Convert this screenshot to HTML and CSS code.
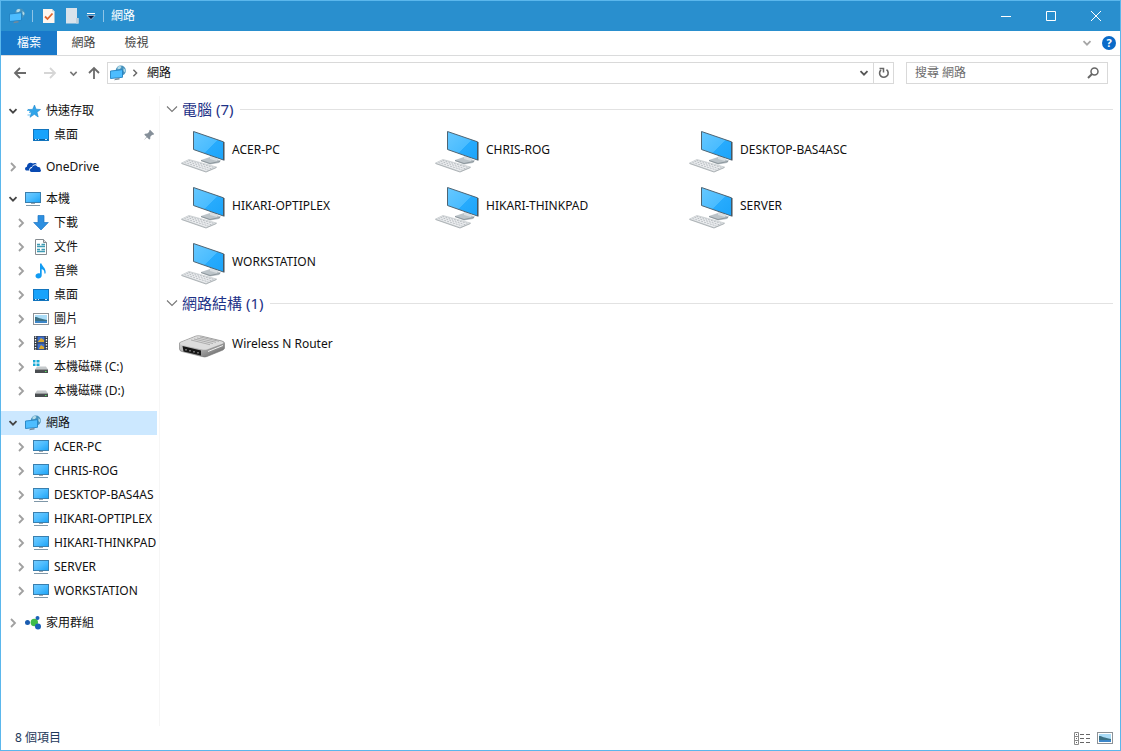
FILE: index.html
```html
<!DOCTYPE html>
<html lang="zh-Hant">
<head>
<meta charset="utf-8">
<title>網路</title>
<link rel="stylesheet" href="styles.css">
</head>
<body>
<svg class="defs" aria-hidden="true">
  <defs>
    <linearGradient id="screen" x1="0" y1="0" x2="1" y2="1"><stop offset="0" stop-color="#74ccff"/><stop offset=".5" stop-color="#4cbcff"/><stop offset="1" stop-color="#1ba2f5"/></linearGradient>
    <linearGradient id="big" x1="0" y1="0" x2="1" y2="1"><stop offset="0" stop-color="#66c8ff"/><stop offset=".55" stop-color="#4abcff"/><stop offset=".56" stop-color="#27abfd"/><stop offset="1" stop-color="#1ca4fa"/></linearGradient>
    <linearGradient id="metal" x1="0" y1="0" x2="1" y2="1"><stop offset="0" stop-color="#dedede"/><stop offset=".6" stop-color="#a5a5a5"/><stop offset="1" stop-color="#555"/></linearGradient>
    <symbol id="i-down" viewBox="0 0 10 10"><path d="M1.5 3.2 5 6.7 8.500 3.2" fill="none" stroke="currentColor" stroke-width="1.8"/></symbol>
    <symbol id="i-thin" viewBox="0 0 12 12"><path d="M1 3.500 6 8.500 11 3.500" fill="none" stroke="currentColor" stroke-width="1.1"/></symbol>
    <symbol id="i-right" viewBox="0 0 10 10"><path d="M3 1 7 5 3 9" fill="none" stroke="currentColor" stroke-width="1.8"/></symbol>
    <symbol id="i-star" viewBox="0 0 16 16"><path d="M9.500 2 11 6.200 15.500 6.500 12 9.200 13.200 14 9.300 11.300 5 14.300 6.400 9.500 2.800 6.500 7.600 6.400Z" fill="#2fa4ea" stroke="#1c86cc" stroke-width=".6"/><path d="M4 9.500H6M2.500 12H5M2 7.500H4" stroke="#65bdf0"/></symbol>
    <symbol id="i-desk" viewBox="0 0 16 16"><rect x=".5" y="2.500" width="15" height="11" fill="#18a3fc" stroke="#1274bd"/><path d="M1 12.500H15" stroke="#0b5f9f"/><path d="M2 12.500H3.500M5 12.500H6M12 12.500H14" stroke="#c4e8ff"/></symbol>
    <symbol id="i-cloud" viewBox="0 0 16 16"><path d="M1.800 11.500C-.6 11.300-.5 7.900 1.900 7.700 2 4.500 5.300 2.600 8 4.600 9 3.600 11 3.800 12 5.400 9.500 4.700 7.400 5.900 6.800 8 4.700 8.200 3.800 10 4.400 11.500Z" fill="#094ab2"/><path d="M6.500 13C4.200 12.800 4.400 9.300 7 9 7.200 6.100 11.200 5.100 12.700 8 15 7.600 15.600 9.400 15.200 10 16.600 11 16 13 14.500 13Z" fill="#094ab2"/></symbol>
    <symbol id="i-pc" viewBox="0 0 16 16"><rect x=".5" y="1.500" width="15" height="10" fill="url(#screen)" stroke="#3a7fae"/><path d="M6 12H10V13H6Z" fill="#9aa7b0"/><path d="M1 14.500H15" stroke="#7f97a8"/></symbol>
    <symbol id="i-dl" viewBox="0 0 16 16"><path d="M5 .5H11V7.500H15.300L8 15 .7 7.500H5Z" fill="#2d8fe0" stroke="#1c76c4" stroke-width=".7"/></symbol>
    <symbol id="i-doc" viewBox="0 0 16 16"><path d="M2.500 .5H10.500L13.500 3.500V15.500H2.500Z" fill="#fff" stroke="#858b90"/><path d="M10.500 .5V3.500H13.500" fill="#ddd" stroke="#858b90"/><path d="M4 5.500H7M8.500 5.500H12M4 7.500H12M4 10.500H7M8.500 10.500H12M4 12.500H12" stroke="#3e9bb4" stroke-width="1.300"/></symbol>
    <symbol id="i-music" viewBox="0 0 16 16"><path d="M7 .5H8.500C9 3.500 13.500 5 12.500 10.500H11.300C11.800 7.500 10 6.500 8.700 6V12.500C8.700 16 2.500 16.500 2.500 13 2.500 10.500 5.500 9.900 7 10.600Z" fill="#119bf2"/></symbol>
    <symbol id="i-pic" viewBox="0 0 16 16"><rect x=".5" y="2.500" width="15" height="11" fill="#fff" stroke="#8d9297"/><path d="M2 4H14V12H2Z" fill="#aadcf7"/><path d="M2 6C5 6 7 8 14 9V12H2Z" fill="#3b7084"/><path d="M2 10H14V12H2Z" fill="#3d86c8"/></symbol>
    <symbol id="i-film" viewBox="0 0 16 16"><path d="M1 1H15V15H1Z" fill="#333b45"/><path d="M4.500 1.500H11.500V7.500H4.500ZM4.500 8.500H11.500V14.500H4.500Z" fill="#3c6fd0"/><path d="M5 6.500 8 3 11 5V7H5ZM6 13.500 8 10 11 12V14H6Z" fill="#d9a92e"/><path d="M2.500 1.500V15M13.500 1.500V15" stroke="#fff" stroke-width="1.400" stroke-dasharray="1.300 1.300"/></symbol>
    <symbol id="i-disk" viewBox="0 0 16 16"><path d="M4 7.500H13L15 10.500H2Z" fill="#c5c9cb"/><path d="M2 10.500H15V14H2Z" fill="#4a4e51"/><path d="M12 12.500H13.500" stroke="#54e35e"/></symbol>
    <symbol id="i-sys" viewBox="0 0 16 16"><path d="M0 1H2.500V3.500H0ZM3.500 1H6.500V3.500H3.500ZM0 4.500H2.500V7H0ZM3.500 4.500H6.500V7H3.500Z" fill="#19a9d5"/><use href="#i-disk"/></symbol>
    <symbol id="i-net" viewBox="0 0 16 16"><circle cx="10.800" cy="5.600" r="5.100" fill="#4692bd"/><path d="M7.500 2C9 .6 11 .8 11.500 2L10 4 7.500 4.500ZM13.500 3 15.500 5 15 7.500 13.500 6Z" fill="#b4dbe8"/><path d="M.5 6 12.500 4.700V12.300L.5 13.500Z" fill="#4dbdff" stroke="#2482c2" stroke-width=".9"/><path d="M4 15.200 9.500 14.400V13L5.500 13.500Z" fill="#74899a"/></symbol>
    <symbol id="i-home" viewBox="0 0 16 16"><path d="M10 8 13 2.500M10 8 13 12" stroke="#7db98a"/><circle cx="2.500" cy="7.500" r="2.500" fill="#1a5cb0"/><circle cx="9.300" cy="7.500" r="3.700" fill="#3fbd49"/><circle cx="12.500" cy="3" r="2" fill="#1a62b8"/><circle cx="13" cy="11.500" r="3" fill="#1a62b8"/></symbol>
    <symbol id="i-pin" viewBox="0 0 12 12"><path d="M7 .8 11.200 5 10 6 9.200 5.700 7.300 7.700 7.200 10 6.200 10.500 3.900 8.300.8 11.200 3.500 7.800 1.300 5.700 2 4.800 4.300 4.600 6.300 2.700 6 2Z" fill="#858f99"/></symbol>
    <symbol id="i-bigpc" viewBox="0 0 48 48">
      <path d="M22 34 31 31 42 34.500 40 37 31 38.500 22 35Z" fill="#bcc4c9"/><path d="M22 34.500 31 37.500 41 35.500" fill="none" stroke="#7f898f" stroke-width=".8"/><path d="M31 29 38 31V35L31 33Z" fill="#d9dee1"/>
      <path d="M14.500 5.500 44.500 15.800V34L14.500 23.500Z" fill="url(#big)" stroke="#4e6473"/><path d="M45 16V34.500" stroke="#3c4a54"/>
      <path d="M2.500 37 10 33.500 37.500 41 27 45.500Z" fill="#eceef0" stroke="#c0c5c8" stroke-width=".7"/>
      <path d="M5.500 36.500 29.500 44M7.500 35.300 32.500 42.800M9.500 34.300 35 41.500" stroke="#adb3b7" stroke-width=".8" stroke-dasharray="2 1"/><path d="M2.500 37.500 27 46 37.500 41.500" fill="none" stroke="#a0a6aa" stroke-width=".8"/>
    </symbol>
    <symbol id="i-router" viewBox="0 0 48 48">
      <path d="M.5 24Q0 22.500 2 22L17 16Q19 15.500 22 16L43 21Q46 22 45.500 24V28Q45.500 29 44 30L28 36.500Q26 37.500 23 36.500L3 31.500Q.5 31 .5 29Z" fill="url(#metal)" stroke="#777" stroke-width=".6"/>
      <path d="M1 23.500Q1 22.500 3 22L17 16.500Q19 16 22 16.500L43 21.500Q45.500 22.500 44 23.500L28 29.500Q26 30 23 29.500L3 25Q1 24.500 1 23.500Z" fill="#dcdcdc"/>
      <path d="M15 19 34 23.500M18 18 37 22.300M21 17 40 21.300M12 20 31 24.700" stroke="#a0a0a0" stroke-width=".8"/>
      <path d="M3.500 26 22 30.500V35.500L4.500 31.500Z" fill="#161616"/><path d="M7 30.500V29M11 31.500V30M15 32.500V31M19 33.500V32" stroke="#999" stroke-width="1.300"/>
      <path d="M29 31.500 44 25.500" stroke="#eee"/>
    </symbol>
  </defs>
</svg>
<div class="window">
  <header class="titlebar">
    <svg class="ic"><use href="#i-net"/></svg>
    <span class="sep"></span>
    <button class="quick" aria-label="內容"><svg class="ic" viewBox="0 0 16 16"><path d="M3 1H12L14.500 3.500V15H3Z" fill="#fff6ee"/><path d="M12 1V3.500H14.500" fill="#d5d5d5"/><path d="M5 8.500 7.500 11 12.500 5.500" fill="none" stroke="#e0652c" stroke-width="1.800"/></svg></button>
    <button class="quick" aria-label="新增資料夾"><svg class="ic" viewBox="0 0 16 16"><path d="M3 0H14V10H15.500V15.500H3Z" fill="#d9e3eb"/><path d="M13 10H15.500V15.500H13Z" fill="#bfd0dc"/></svg></button>
    <button class="quick more" aria-label="自訂"><svg viewBox="0 0 10 10"><path d="M1 2.500H9" stroke="#fff"/><path d="M1 4.500H9L5 8.500Z" fill="#071a45" stroke="#fff" stroke-width=".5"/></svg></button>
    <span class="sep"></span>
    <h1>網路</h1>
    <div class="controls">
      <button aria-label="最小化"><svg viewBox="0 0 12 12"><path d="M1 6.500H11"/></svg></button>
      <button aria-label="最大化"><svg viewBox="0 0 12 12"><path d="M1.500 1.500H10.500V10.500H1.500Z"/></svg></button>
      <button aria-label="關閉"><svg viewBox="0 0 12 12"><path d="M1 1 11 11M11 1 1 11"/></svg></button>
    </div>
  </header>
  <nav class="tabs">
    <button class="tab file">檔案</button>
    <button class="tab">網路</button>
    <button class="tab view">檢視</button>
    <div class="help">
      <button class="expand" aria-label="展開功能區"><svg class="ch"><use href="#i-down"/></svg></button>
      <button aria-label="說明" class="question">?</button>
    </div>
  </nav>
  <div class="address">
    <button class="nav" aria-label="上一頁"><svg viewBox="0 0 14 14"><path d="M13 7H2M7 2 2 7 7 12"/></svg></button>
    <button class="nav off" aria-label="下一頁"><svg viewBox="0 0 14 14"><path d="M1 7H12M7 2 12 7 7 12"/></svg></button>
    <button class="nav recent" aria-label="最近位置"><svg viewBox="0 0 10 10"><use href="#i-down"/></svg></button>
    <button class="nav up" aria-label="上一層"><svg viewBox="0 0 14 14"><path d="M7 13V2M2 7 7 2 12 7"/></svg></button>
    <div class="path">
      <svg class="ic"><use href="#i-net"/></svg>
      <svg class="crumb"><use href="#i-right"/></svg>
      <span class="place">網路</span>
      <button class="drop" aria-label="先前的位置"><svg class="ch"><use href="#i-down"/></svg></button>
      <button class="refresh" aria-label="重新整理"><svg viewBox="0 0 12 12"><path d="M3 2.800A4.300 4.300 0 1 0 8.500 2.600" fill="none" stroke="#666" stroke-width="1.600"/><path d="M1.500 1.500H5.500V5.500" fill="none" stroke="#666" stroke-width="1.500"/></svg></button>
    </div>
    <div class="search">
      <input type="text" aria-label="搜尋 網路" placeholder="搜尋 網路">
      <svg viewBox="0 0 12 12"><circle cx="7.500" cy="4.500" r="3.500" fill="none" stroke="#666" stroke-width="1.500"/><path d="M5 7 1 11" stroke="#666" stroke-width="2"/></svg>
    </div>
  </div>
  <div class="body">
    <aside class="sidebar">
      <ul class="tree">
        <li class="row open"><svg class="ch"><use href="#i-down"/></svg><svg class="ic"><use href="#i-star"/></svg><span>快速存取</span></li>
        <li class="row child"><span class="ch"></span><svg class="ic"><use href="#i-desk"/></svg><span>桌面</span><svg class="pin"><use href="#i-pin"/></svg></li>
      </ul>
      <ul class="tree">
        <li class="row"><svg class="ch"><use href="#i-right"/></svg><svg class="ic"><use href="#i-cloud"/></svg><span>OneDrive</span></li>
      </ul>
      <ul class="tree">
        <li class="row open"><svg class="ch"><use href="#i-down"/></svg><svg class="ic"><use href="#i-pc"/></svg><span>本機</span></li>
        <li class="row child"><svg class="ch"><use href="#i-right"/></svg><svg class="ic"><use href="#i-dl"/></svg><span>下載</span></li>
        <li class="row child"><svg class="ch"><use href="#i-right"/></svg><svg class="ic"><use href="#i-doc"/></svg><span>文件</span></li>
        <li class="row child"><svg class="ch"><use href="#i-right"/></svg><svg class="ic"><use href="#i-music"/></svg><span>音樂</span></li>
        <li class="row child"><svg class="ch"><use href="#i-right"/></svg><svg class="ic"><use href="#i-desk"/></svg><span>桌面</span></li>
        <li class="row child"><svg class="ch"><use href="#i-right"/></svg><svg class="ic"><use href="#i-pic"/></svg><span>圖片</span></li>
        <li class="row child"><svg class="ch"><use href="#i-right"/></svg><svg class="ic"><use href="#i-film"/></svg><span>影片</span></li>
        <li class="row child"><svg class="ch"><use href="#i-right"/></svg><svg class="ic"><use href="#i-sys"/></svg><span>本機磁碟 (C:)</span></li>
        <li class="row child"><svg class="ch"><use href="#i-right"/></svg><svg class="ic"><use href="#i-disk"/></svg><span>本機磁碟 (D:)</span></li>
      </ul>
      <ul class="tree">
        <li class="row open selected"><svg class="ch"><use href="#i-down"/></svg><svg class="ic"><use href="#i-net"/></svg><span>網路</span></li>
        <li class="row child"><svg class="ch"><use href="#i-right"/></svg><svg class="ic"><use href="#i-pc"/></svg><span>ACER-PC</span></li>
        <li class="row child"><svg class="ch"><use href="#i-right"/></svg><svg class="ic"><use href="#i-pc"/></svg><span>CHRIS-ROG</span></li>
        <li class="row child"><svg class="ch"><use href="#i-right"/></svg><svg class="ic"><use href="#i-pc"/></svg><span>DESKTOP-BAS4AS</span></li>
        <li class="row child"><svg class="ch"><use href="#i-right"/></svg><svg class="ic"><use href="#i-pc"/></svg><span>HIKARI-OPTIPLEX</span></li>
        <li class="row child"><svg class="ch"><use href="#i-right"/></svg><svg class="ic"><use href="#i-pc"/></svg><span>HIKARI-THINKPAD</span></li>
        <li class="row child"><svg class="ch"><use href="#i-right"/></svg><svg class="ic"><use href="#i-pc"/></svg><span>SERVER</span></li>
        <li class="row child"><svg class="ch"><use href="#i-right"/></svg><svg class="ic"><use href="#i-pc"/></svg><span>WORKSTATION</span></li>
      </ul>
      <ul class="tree">
        <li class="row"><svg class="ch"><use href="#i-right"/></svg><svg class="ic"><use href="#i-home"/></svg><span>家用群組</span></li>
      </ul>
    </aside>
    <main class="content">
      <section>
        <h2><svg><use href="#i-thin"/></svg>電腦 (7)</h2>
        <ul class="items">
          <li><svg><use href="#i-bigpc"/></svg>ACER-PC</li>
          <li><svg><use href="#i-bigpc"/></svg>CHRIS-ROG</li>
          <li><svg><use href="#i-bigpc"/></svg>DESKTOP-BAS4ASC</li>
          <li><svg><use href="#i-bigpc"/></svg>HIKARI-OPTIPLEX</li>
          <li><svg><use href="#i-bigpc"/></svg>HIKARI-THINKPAD</li>
          <li><svg><use href="#i-bigpc"/></svg>SERVER</li>
          <li><svg><use href="#i-bigpc"/></svg>WORKSTATION</li>
        </ul>
      </section>
      <section>
        <h2><svg><use href="#i-thin"/></svg>網路結構 (1)</h2>
        <ul class="items">
          <li><svg><use href="#i-router"/></svg>Wireless N Router</li>
        </ul>
      </section>
    </main>
  </div>
  <footer class="status">
    <span>8 個項目</span>
    <div class="modes">
      <button aria-label="詳細資料"><svg class="ic" viewBox="0 0 16 16"><path d="M.5 2.500H4.500V14.500H.5ZM.5 6.500H4.500M.5 10.500H4.500" fill="none" stroke="#8a8a8a"/><path d="M2 4.500H3M2 8.500H3M2 12.500H3M6 4.500H10M12 4.500H16M6 8.500H10M12 8.500H16M6 12.500H10M12 12.500H16" stroke="#666"/></svg></button>
      <button aria-label="大圖示"><svg class="ic" viewBox="0 0 16 16"><use href="#i-pic"/></svg></button>
    </div>
  </footer>
</div>
</body>
</html>
```
FILE: styles.css
```css
* { box-sizing: border-box; }
body {
  margin: 0;
  font: 12px/24px "Noto Sans", "Noto Sans CJK TC", sans-serif;
  color: #111;
  background: #fff;
}
button {
  font: inherit;
  color: inherit;
  background: none;
  border: 0;
  padding: 0;
  display: flex;
  align-items: center;
  justify-content: center;
}
ul { list-style: none; margin: 0; padding: 0; }
svg { flex: none; }
.defs { position: absolute; width: 0; height: 0; }
.ic { width: 16px; height: 16px; flex: none; }
.ch { width: 10px; height: 10px; flex: none; }

.window {
  min-height: 100vh;
  display: flex;
  flex-direction: column;
  border: 1px solid #5bb7ec;
}

.titlebar {
  height: 30px;
  padding: 0 2px 0 8px;
  display: flex;
  align-items: center;
  background: #298fce;
  color: #fff;
}
.sep { width: 1px; height: 12px; margin: 0 7px; background: #8fc4e6; }
.quick { margin-right: 7px; }
.more { width: 10px; margin-right: 0; }
.more svg { width: 10px; height: 10px; }
.titlebar h1 { margin: 0; font-size: 12px; font-weight: 400; }
.controls { margin-left: auto; display: flex; }
.controls button { width: 45px; height: 30px; }
.controls svg { width: 12px; height: 12px; fill: none; stroke: #fff; }

.tabs {
  height: 25px;
  display: flex;
  border-bottom: 1px solid #dadbdc;
  color: #444;
}
.tab { width: 56px; height: 24px; }
.tab:not(.file) { width: 53px; }
.file { background: #1979ca; color: #fff; }
.help { margin-left: auto; display: flex; align-items: center; gap: 10px; padding-right: 4px; }
.expand { color: #a6a6a6; }
.question {
  width: 14px;
  height: 14px;
  border-radius: 50%;
  background: #0a6ac8;
  color: #fff;
  font-size: 11px;
  font-weight: 700;
  line-height: 14px;
}

.address { height: 34px; padding: 0 12px; display: flex; align-items: center; }
.nav svg { width: 14px; height: 14px; fill: none; stroke: #6b6b6b; stroke-width: 1.800; }
.nav { margin-right: 16px; }
.off svg { stroke: #d6d6d6; }
.recent { margin: 0 9px 0 -4px; color: #777; }
.recent svg { width: 9px; height: 9px; }
.up { margin-right: 6px; }
.path, .search { height: 22px; border: 1px solid #d9d9d9; display: flex; align-items: center; }
.path { flex: 1; padding-left: 2px; }
.crumb { width: 8px; height: 8px; margin: 0 8px 0 5px; color: #666; }
.place { flex: 1; }
.drop { width: 19px; color: #555; }
.refresh { width: 20px; height: 20px; border-left: 1px solid #d9d9d9; }
.refresh svg { width: 12px; height: 12px; }
.search { width: 202px; margin-left: 12px; padding: 0 8px; }
.search input {
  flex: 1;
  min-width: 0;
  border: 0;
  padding: 0;
  outline: 0;
  background: none;
  font: inherit;
}
.search input::placeholder { color: #6d6d6d; opacity: 1; }
.search svg { width: 12px; height: 12px; }

.body { flex: 1; display: flex; padding-top: 6px; }
.sidebar {
  width: 159px;
  flex: none;
  padding: 3px 2px 0 0;
  border-right: 1px solid #f6f6f6;
  display: flex;
  flex-direction: column;
  gap: 8px;
}
.row {
  height: 24px;
  padding-left: 7px;
  display: flex;
  align-items: center;
  color: #a0a0a0;
  white-space: nowrap;
  overflow: hidden;
}
.row .ic { margin: 0 5px 0 7px; }
.row span { color: #111; }
.child { padding-left: 15px; }
.open { color: #444; }
.selected { background: #cce8ff; }
.pin { width: 12px; height: 12px; margin: 0 2px 0 auto; }

.content { flex: 1; padding: 0 7px 0 6px; }
.content h2 {
  margin: 0;
  height: 26px;
  display: flex;
  align-items: center;
  font-size: 15px;
  font-weight: 400;
  color: #1e3287;
}
.content h2 svg { width: 12px; height: 12px; margin-right: 4px; color: #777; }
.content h2::after { content: ""; flex: 1; height: 1px; margin-left: 7px; background: #e2e2e2; }
.items {
  display: grid;
  grid-template-columns: repeat(auto-fill, 254px);
  padding-left: 13px;
}
.items li { height: 56px; display: flex; align-items: center; gap: 5px; }
.items svg { width: 48px; height: 48px; }

.status {
  height: 24px;
  padding: 0 7px 0 14px;
  display: flex;
  align-items: center;
  justify-content: space-between;
  color: #1e395b;
}
.modes { display: flex; gap: 7px; }
```
